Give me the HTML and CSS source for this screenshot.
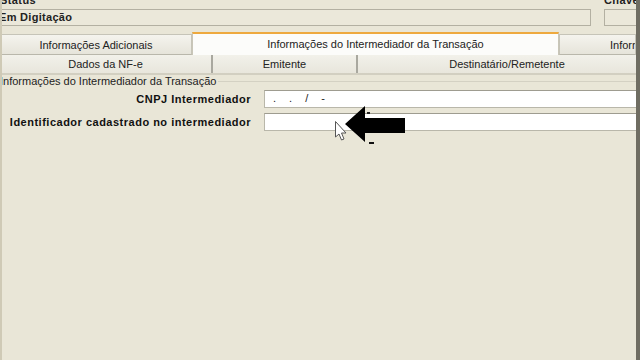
FILE: index.html
```html
<!DOCTYPE html>
<html lang="pt-BR">
<head>
  <meta charset="UTF-8">
  <title>NF-e - Intermediador</title>
  <link rel="stylesheet" href="styles.css">
</head>
<body>
  <div class="window">
    <div class="top-fields">
      <div class="field-group">
        <label class="field-label">Status</label>
        <div class="readonly-box">Em Digitação</div>
      </div>
      <div class="field-group">
        <label class="field-label">Chave</label>
        <div class="readonly-box"></div>
      </div>
    </div>

    <div class="tabs tabs-upper">
      <div class="tab tab-adicionais">Informações Adicionais</div>
      <div class="tab tab-active">Informações do Intermediador da Transação</div>
      <div class="tab tab-cut">Informações</div>
    </div>
    <div class="tabs tabs-lower">
      <div class="tab tab-dados">Dados da NF-e</div>
      <div class="tab tab-emitente">Emitente</div>
      <div class="tab tab-dest">Destinatário/Remetente</div>
    </div>

    <fieldset class="group">
      <legend>Informações do Intermediador da Transação</legend>
      <div class="form-grid">
        <label class="form-label">CNPJ Intermediador</label>
        <div class="input masked">. . / -</div>
        <label class="form-label">Identificador cadastrado no intermediador</label>
        <div class="input"></div>
      </div>
    </fieldset>

    <!-- video annotation over the form -->
    <svg class="annotation" width="80" height="50" viewBox="330 100 80 50">
      <polygon points="345,124 365,106 365,118 405,118 405,133 365,133 365,142" fill="#000"/>
      <rect x="367" y="112" width="3" height="2" fill="#222"/>
      <rect x="369" y="142" width="5" height="2" fill="#111"/>
      <path d="M335.5 121.5 L335.5 137 L339 134 L341.5 140 L344 139 L341.5 133 L346 133 Z" fill="#fff" stroke="#555" stroke-width="1"/>
    </svg>
  </div>
</body>
</html>
```

FILE: styles.css
```css
* {
  margin: 0;
  padding: 0;
  box-sizing: border-box;
}

body {
  font-family: 'Liberation Sans', Tahoma, Arial, sans-serif;
  font-size: 11px;
  color: #000;
  background: #e9e6d7;
  overflow: hidden;
}

.window {
  position: relative;
  width: 640px;
  height: 360px;
  background: #e9e6d7;
  border-left: 2px solid #cfcab6;
  border-right: 4px solid #6f6d62;
  overflow: hidden;
}

/* status / chave */

.top-fields {
  display: grid;
  grid-template-columns: 591px 1fr;
  column-gap: 13px;
  margin-top: -4px;
  margin-left: -2px;
}

.field-label {
  display: block;
  font-weight: bold;
  letter-spacing: 0.4px;
  height: 13px;
  line-height: 8px;
  color: #222;
}

.readonly-box {
  height: 17px;
  line-height: 15px;
  border: 1px solid #b3b0a2;
  background: #ebe8da;
  font-weight: bold;
  letter-spacing: 0.3px;
  color: #222;
  white-space: nowrap;
  overflow: hidden;
}

.top-fields .field-group:first-child .readonly-box {
  text-indent: -2px;
}

/* tabs */

.tabs {
  display: flex;
  margin-left: -2px;
}

.tabs-upper {
  margin-top: 6px;
  height: 23px;
  align-items: flex-end;
}

.tab {
  text-align: center;
  white-space: nowrap;
  overflow: hidden;
  color: #222;
}

.tabs-upper .tab {
  height: 21px;
  line-height: 21px;
  background: linear-gradient(#f5f4ee, #e6e4da);
  border: 1px solid #c6c4b8;
  border-bottom: 1px solid #b9b7ab;
}

.tab-adicionais {
  width: 192px;
}

.tabs-upper .tab-active {
  width: 367px;
  height: 23px;
  line-height: 20px;
  background: #fcfcfa;
  border-top: 2px solid #eea93e;
  border-bottom: none;
  border-left: 1px solid #c9c6b8;
  border-right: 1px solid #c9c6b8;
}

.tab-cut {
  flex: 1;
  text-align: left;
  padding-left: 50px;
}

.tabs-lower {
  height: 20px;
  border-bottom: 2px solid #d2cfc1;
}

.tabs-lower .tab {
  height: 18px;
  line-height: 18px;
  background: linear-gradient(#f2f1ea, #e8e6dc);
  border-right: 2px solid #a9a89f;
}

.tab-dados {
  width: 213px;
}

.tab-emitente {
  width: 145px;
}

.tab-dest {
  flex: 1;
  border-right: none !important;
  text-indent: 20px;
}

/* group box */

.group {
  border: none;
  border-top: 1px solid #d4d1c3;
  margin-top: 1px;
  margin-left: -2px;
  padding-top: 3px;
}

.group legend {
  padding: 0 2px 0 0;
  color: #222;
  line-height: 11px;
}

.form-grid {
  display: grid;
  grid-template-columns: 251px 1fr;
  column-gap: 13px;
  row-gap: 5px;
  align-items: center;
}

.form-label {
  font-weight: bold;
  letter-spacing: 0.5px;
  text-align: right;
  color: #111;
  white-space: nowrap;
}

.input {
  height: 18px;
  margin-right: -10px;
  background: #fff;
  border: 1px solid #b9b7aa;
  border-top-color: #9e9c90;
}

.masked {
  padding-left: 8px;
  letter-spacing: 5px;
  line-height: 14px;
  color: #222;
}

.annotation {
  position: absolute;
  left: 328px;
  top: 100px;
}
```
